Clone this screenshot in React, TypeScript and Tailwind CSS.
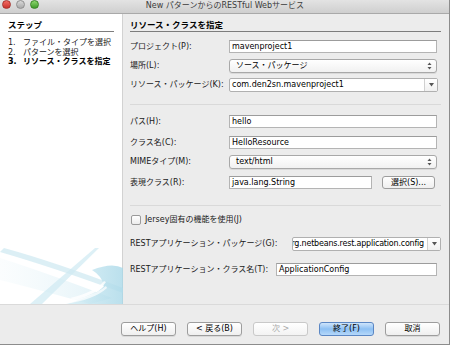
import React from "react";

const font = "font-['DejaVu_Sans','Noto_Sans_CJK_JP',sans-serif]";

// Plain text field
const TextField = ({ value, className = "" }: { value: string; className?: string }) => (
  <div
    className={`h-[13px] min-w-0 bg-white border border-[#b4b4b4] border-t-[#9c9c9c] flex items-center pl-[2px] text-[8px] leading-none text-black overflow-hidden whitespace-nowrap ${className}`}
  >
    {value}
  </div>
);

// Aqua style popup button with up/down arrows
const PopUp = ({ value }: { value: string }) => (
  <div className="h-[14px] flex-1 min-w-0 mr-[4px] rounded-[3px] border border-[#a8a8a8] bg-gradient-to-b from-white to-[#f1f1f1] shadow-[0_1px_0_rgba(0,0,0,0.08)] flex items-center pl-[6px] pr-[4px] text-[8px] leading-none text-black">
    <span className="flex-1">{value}</span>
    <svg width="5" height="8" viewBox="0 0 5 8">
      <path d="M2.5 0.5 L4.5 3 L0.5 3 Z" fill="#555" />
      <path d="M2.5 7.5 L4.5 5 L0.5 5 Z" fill="#555" />
    </svg>
  </div>
);

// Editable combo box with separate drop button
const Combo = ({ value, clipLeft = false, className = "" }: { value: string; clipLeft?: boolean; className?: string }) => (
  <div className={`h-[14px] min-w-0 flex bg-white border border-[#b0b0b0] rounded-[2px] ${className}`}>
    <div
      className={`flex-1 min-w-0 flex items-center overflow-hidden whitespace-nowrap leading-none text-black text-[8px] ${
        clipLeft ? "justify-end pr-[3px] tracking-[-0.2px]" : "pl-[2px]"
      }`}
    >
      <span className="shrink-0">{value}</span>
    </div>
    <div className="w-[13px] shrink-0 border-l border-[#d0d0d0] bg-gradient-to-b from-white to-[#f0f0f0] flex items-center justify-center">
      <svg width="5" height="4" viewBox="0 0 5 4">
        <path d="M0 0 L5 0 L2.5 3.5 Z" fill="#555" />
      </svg>
    </div>
  </div>
);

const Row = ({ label, labelW = "w-[99px]", className = "", children }: { label: string; labelW?: string; className?: string; children: React.ReactNode }) => (
  <div className={`flex items-center min-w-0 ${className}`}>
    <div className={`${labelW} shrink-0 text-[8px] leading-none text-[#1a1a1a] whitespace-nowrap`}>{label}</div>
    {children}
  </div>
);

const Button = ({ label, primary = false, disabled = false }: { label: string; primary?: boolean; disabled?: boolean }) => (
  <div
    className={`w-[55px] h-[14px] rounded-[3px] border flex items-center justify-center text-[8px] leading-none ${
      primary
        ? "border-[#5b87c4] bg-gradient-to-b from-[#cfe5fb] via-[#8dc0f3] to-[#b5d8fa] text-black"
        : disabled
        ? "border-[#c9c9c9] bg-gradient-to-b from-white to-[#f3f3f3] text-[#a8a8a8]"
        : "border-[#9d9d9d] bg-gradient-to-b from-white to-[#efefef] text-black shadow-[0_1px_0_rgba(0,0,0,0.08)]"
    }`}
  >
    {label}
  </div>
);

const Swoosh = () => (
  <svg width="123" height="56" viewBox="0 0 123 56" className="block mt-auto">
    <defs>
      <linearGradient id="fadeL" x1="0" x2="1" y1="0" y2="0">
        <stop offset="0" stopColor="#e6f4f9" stopOpacity="0.3" />
        <stop offset="1" stopColor="#c6e6f0" stopOpacity="0.9" />
      </linearGradient>
      <linearGradient id="fadeR" x1="0" x2="1" y1="0" y2="0">
        <stop offset="0" stopColor="#d6eef5" />
        <stop offset="1" stopColor="#a9d8e8" />
      </linearGradient>
    </defs>
    <path d="M0 10 Q50 26 112 50 L90 56 Q40 42 0 32 Z" fill="url(#fadeL)" opacity="0.6" />
    <path d="M4 0 Q55 14 123 40 L123 45 Q55 20 0 4 Z" fill="#cde8f1" opacity="0.7" />
    <path d="M95 0 L99 0 L42 56 L30 56 Z" fill="#cfe9f2" opacity="0.7" />
    <path d="M92 22 Q112 14 123 20 L123 56 L66 56 Q96 48 104 38 Q102 28 92 22 Z" fill="url(#fadeR)" opacity="0.8" />
    <path d="M70 50 Q95 44 104 33 L106 34 Q98 46 74 52 Z" fill="#ffffff" opacity="0.8" />
    <path d="M60 54 Q92 50 106 38 L107 40 Q94 52 64 56 Z" fill="#ffffff" opacity="0.7" />
  </svg>
);

export default function App() {
  return (
    <div className={`w-[450px] h-[345px] bg-[#ececec] flex flex-col overflow-hidden border-r border-b border-[#8c8c8c] ${font}`}>
      {/* Title bar */}
      <div className="h-[14px] shrink-0 flex items-center bg-gradient-to-b from-[#e3e3e3] to-[#cfcfcf] border-b border-[#a9a9a9]">
        <div className="flex gap-[5px] pl-[2px] -mt-[4px]">
          <span className="w-[9px] h-[9px] rounded-full bg-gradient-to-b from-[#f26b64] to-[#c9302b] border border-[#a8332e]" />
          <span className="w-[9px] h-[9px] rounded-full bg-gradient-to-b from-[#d9d9d9] to-[#a9a9a9] border border-[#8f8f8f]" />
          <span className="w-[9px] h-[9px] rounded-full bg-gradient-to-b from-[#8ed86f] to-[#3d9a28] border border-[#3b8527]" />
        </div>
        <div className="flex-1 text-center text-[8px] leading-none text-[#3b3b3b] -ml-[38px] -mt-[2px]">
          New パターンからのRESTful Webサービス
        </div>
      </div>

      {/* Main */}
      <div className="h-[290px] shrink-0 flex">
        {/* Steps */}
        <div className="w-[123px] shrink-0 bg-white border-r border-[#d2d2d2] flex flex-col">
          <div className="mx-[8px] mt-[5px] h-[13px] leading-[12px] text-[8.5px] font-bold text-black border-b border-[#7d7d7d]">
            ステップ
          </div>
          <div className="mx-[8px] mt-[6px] text-[8px] leading-[9.5px] text-[#222]">
            <div className="flex"><span className="w-[15px]">1.</span>ファイル・タイプを選択</div>
            <div className="flex"><span className="w-[15px]">2.</span>パターンを選択</div>
            <div className="flex font-bold text-black"><span className="w-[15px]">3.</span>リソース・クラスを指定</div>
          </div>
          <Swoosh />
        </div>

        {/* Form */}
        <div className="flex-1 min-w-0 pl-[7px] pr-[8px] flex flex-col">
          <div className="mt-[5px] h-[13px] leading-[12px] text-[8.5px] font-bold text-black border-b border-[#7d7d7d]">
            リソース・クラスを指定
          </div>

          <Row label="プロジェクト(P):" className="mt-[8px]">
            <TextField value="mavenproject1" className="flex-1 mr-[4px]" />
          </Row>
          <Row label="場所(L):" className="mt-[6px]">
            <PopUp value="ソース・パッケージ" />
          </Row>
          <Row label="リソース・パッケージ(K):" className="mt-[5px]">
            <Combo value="com.den2sn.mavenproject1" className="flex-1 mr-[3px]" />
          </Row>

          <div className="mt-[12px] border-t border-[#d9d9d9]" />

          <Row label="パス(H):" className="mt-[10px]">
            <TextField value="hello" className="flex-1 mr-[4px]" />
          </Row>
          <Row label="クラス名(C):" className="mt-[8px]">
            <TextField value="HelloResource" className="flex-1 mr-[4px]" />
          </Row>
          <Row label="MIMEタイプ(M):" className="mt-[6px]">
            <PopUp value="text/html" />
          </Row>
          <Row label="表現クラス(R):" className="mt-[7px]">
            <TextField value="java.lang.String" className="w-[143px]" />
            <div className="ml-[10px] w-[53px] h-[13px] rounded-[3px] border border-[#9d9d9d] bg-gradient-to-b from-white to-[#efefef] flex items-center justify-center text-[8px] leading-none text-black">
              選択(S)...
            </div>
          </Row>

          <div className="mt-[16px] border-t border-[#d9d9d9]" />

          <div className="mt-[8px] h-[12px] flex items-center pl-[1px]">
            <span className="w-[10px] h-[10px] rounded-[2px] border border-[#9a9a9a] bg-gradient-to-b from-white to-[#ececec]" />
            <span className="ml-[4px] text-[8px] leading-none text-[#1a1a1a]">Jersey固有の機能を使用(J)</span>
          </div>

          <Row label="RESTアプリケーション・パッケージ(G):" labelW="w-[162px]" className="mt-[11px]">
            <Combo value="org.netbeans.rest.application.config" clipLeft className="flex-1" />
          </Row>
          <Row label="RESTアプリケーション・クラス名(T):" labelW="w-[146px]" className="mt-[12px]">
            <TextField value="ApplicationConfig" className="flex-1 mr-[4px]" />
          </Row>
        </div>
      </div>

      {/* Buttons */}
      <div className="flex-1 border-t border-[#dadada] flex justify-end items-start gap-[11px] pr-[9px] pt-[17px]">
        <Button label="ヘルプ(H)" />
        <Button label="< 戻る(B)" />
        <Button label="次 >" disabled />
        <Button label="終了(F)" primary />
        <Button label="取消" />
      </div>
    </div>
  );
}
